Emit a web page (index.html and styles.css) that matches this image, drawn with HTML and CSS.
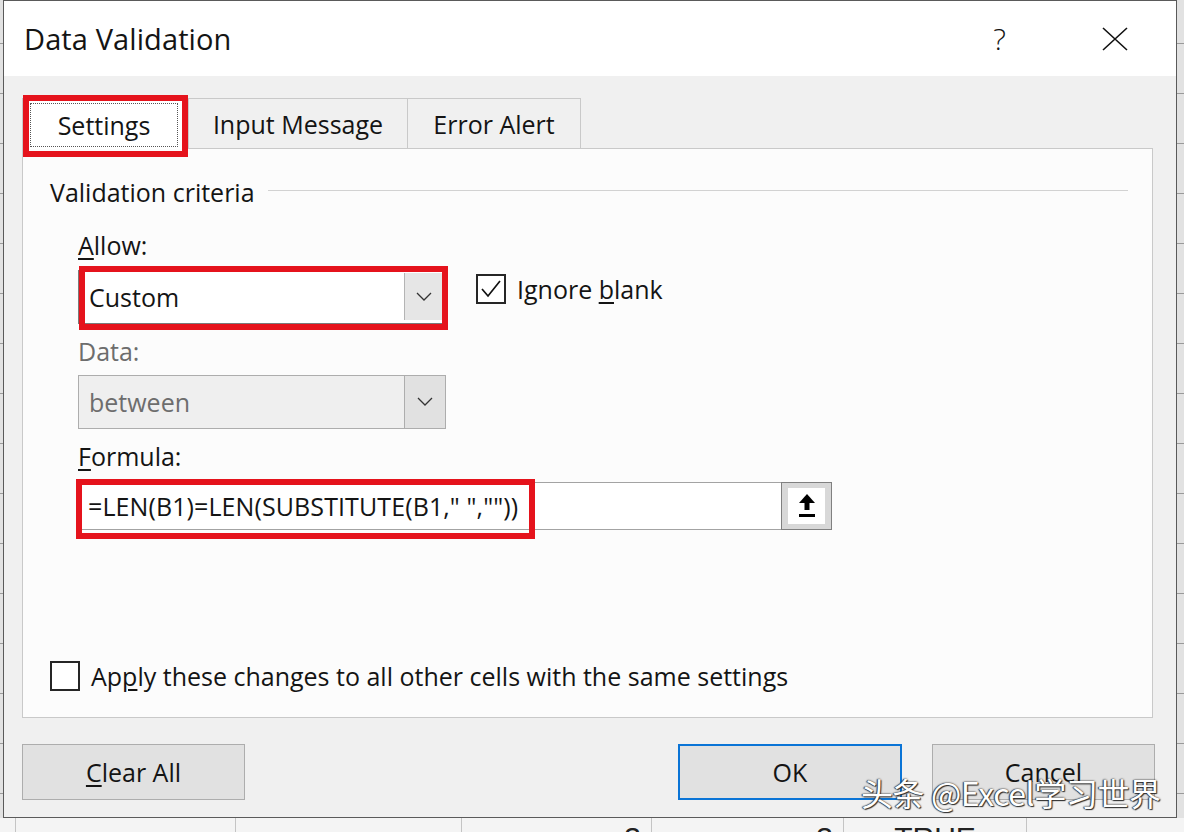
FILE: index.html
```html
<!DOCTYPE html>
<html lang="en">
<head>
	<meta charset="UTF-8">
	<title>Data Validation</title>
	<link rel="stylesheet" href="styles.css">
</head>
<body>

<div class="desk">
	<div class="dialog">
		<div class="titlebar">
			<span class="title">Data Validation</span>
			<span class="help">?</span>
			<svg class="close" width="26" height="24" viewBox="0 0 26 24"><path d="M1 1L25 23M25 1L1 23" stroke="#111" stroke-width="1.6" fill="none"/></svg>
		</div>

		<div class="body">
			<div class="tabs">
				<div class="tab t1 active mark"><span class="focus">Settings</span></div>
				<div class="tab t2">Input Message</div>
				<div class="tab t3">Error Alert</div>
			</div>

			<div class="panel">
				<div class="group-head"><span>Validation criteria</span><i class="rule"></i></div>

				<div class="fields">
					<div class="label"><u>A</u>llow:</div>
					<div class="allow-row">
						<div class="combo mark">
							<span class="value">Custom</span>
							<span class="drop"><svg width="16" height="10" viewBox="0 0 16 10"><polyline points="1,1 8,8 15,1" fill="none" stroke="#333" stroke-width="1.3"/></svg></span>
						</div>
						<div class="check ignore">
							<span class="box"><svg width="26" height="26" viewBox="0 0 26 26"><polyline points="4,13 10,20 22,5" fill="none" stroke="#111" stroke-width="1.7"/></svg></span>
							<span>Ignore <u>b</u>lank</span>
						</div>
					</div>

					<div class="label dim">Data:</div>
					<div class="combo off">
						<span class="value">between</span>
						<span class="drop"><svg width="16" height="10" viewBox="0 0 16 10"><polyline points="1,1 8,8 15,1" fill="none" stroke="#333" stroke-width="1.3"/></svg></span>
					</div>

					<div class="label"><u>F</u>ormula:</div>
					<div class="formula">
						<div class="textbox mark">=LEN(B1)=LEN(SUBSTITUTE(B1," ",""))</div>
						<span class="refbtn"><span class="refin"><svg width="16" height="24" viewBox="0 0 16 24"><polygon points="8,0 0,9 16,9" fill="#000"/><rect x="5.5" y="8" width="5" height="8" fill="#000"/><rect x="0" y="20" width="16" height="3" fill="#000"/></svg></span></span>
					</div>
				</div>

				<div class="check apply">
					<span class="box"></span>
					<span>Ap<u>p</u>ly these changes to all other cells with the same settings</span>
				</div>
			</div>

			<div class="buttons">
				<button class="btn"><u>C</u>lear All</button>
				<button class="btn ok">OK</button>
				<button class="btn cancel">Cancel</button>
			</div>
		</div>

		<div class="watermark">头条 @Excel学习世界</div>
	</div>

	<div class="sheet-row">
		<span class="cell c0"></span>
		<span class="cell c1"></span>
		<span class="cell c2"></span>
		<span class="cell c3 num">3</span>
		<span class="cell c4 num">3</span>
		<span class="cell c5 mid">TRUE</span>
		<span class="cell c6"></span>
	</div>
</div>

</body>
</html>
```

FILE: styles.css
```css
*,*::before,*::after{box-sizing: border-box;}
body{margin: 0;font-family: "Open Sans","Noto Sans",sans-serif;color: #141414;}
u{text-decoration-thickness: 2px;text-underline-offset: 3px;}

.desk{width: 1184px;height: 832px;overflow: hidden;background: #e2e2e2 repeating-linear-gradient(to bottom, transparent 0, transparent 49px, #9a9a9a 49px, #9a9a9a 50px);background-position: 0 -6px;}

.dialog{position: relative;margin-left: 3px;width: 1174px;height: 818px;border: 1px solid #5a5a5a;background: #f0f0f0;display: flex;flex-direction: column;}

.titlebar{height: 75px;flex: none;background: #fff;display: flex;align-items: center;padding: 0 48px 0 20px;}
.title{font-size: 29px;letter-spacing: 0.1px;}
.help{margin-left: auto;margin-right: 96px;font-size: 30px;font-weight: 300;}
.close{display: block;}

.body{flex: 1;padding: 22px 21px 0 18px;}

.tabs{display: flex;align-items: flex-end;height: 50px;}
.tab{height: 50px;border: 1px solid #c9c9c9;border-bottom: none;background: #f0f0f0;display: flex;align-items: center;justify-content: center;font-size: 25px;margin-left: -1px;}
.tab.t1{width: 167px;margin-left: 0;}
.tab.t2{width: 220px;}
.tab.t3{width: 174px;}
.tab.active{height: 51px;margin-bottom: -1px;background: #fff;position: relative;z-index: 1;align-items: stretch;padding: 4px 10px 2px 7px;}
.focus{flex: 1;display: flex;align-items: center;justify-content: center;border: 1px dotted #555;}

/* red annotation boxes */
.mark{position: relative;}
.mark::after{content: "";position: absolute;border: 6px solid #e5131c;pointer-events: none;}
.tab.mark::after{left: 0;right: 0;top: -4px;bottom: -8px;}
.combo.mark::after{left: 0;right: -3px;top: -5px;bottom: -7px;}
.textbox.mark::after{left: -3px;top: -4px;width: 459px;bottom: -10px;}

.panel{width: 1131px;height: 570px;border: 1px solid #c9c9c9;background: #fcfcfc;display: flex;flex-direction: column;padding: 0 24px 25px 27px;}

.group-head{display: flex;align-items: center;margin-top: 27px;height: 32px;font-size: 25px;}
.rule{flex: 1;height: 1px;background: #d2d2d2;margin-left: 13px;margin-top: -4px;}

.fields{margin-left: 28px;}
.label{font-size: 25px;line-height: 32px;margin-top: 11px;}
.fields .label:first-child{margin-top: 21px;}
.label.dim{color: #6d6d6d;}

.allow-row{display: flex;align-items: flex-start;margin-top: 9px;}

.combo{width: 368px;height: 54px;border: 1px solid #7a7a7a;background: #fff;display: flex;align-items: stretch;font-size: 25px;}
.combo .value{flex: 1;display: flex;align-items: center;padding-left: 10px;}
.drop{width: 38px;display: flex;align-items: center;justify-content: center;border-left: 1px solid #b4b4b4;background: #e6e6e6;margin: 2px 3px 3px 0;}
.combo.off{margin-top: 8px;border-color: #adadad;background: #efefef;color: #6d6d6d;}
.combo.off .drop{width: 41px;margin: 0;background: #e1e1e1;border-left-color: #adadad;}

.check{display: flex;align-items: center;gap: 11px;height: 32px;font-size: 25px;}
.box{width: 30px;height: 30px;border: 2px solid #262626;background: #fff;display: flex;align-items: center;justify-content: center;}
.ignore{margin-left: 30px;margin-top: 3px;}
.apply{margin-top: auto;}

.formula{display: flex;margin-top: 10px;width: 754px;}
.textbox{flex: 1;height: 48px;border: 1px solid #a3a3a3;border-right: none;background: #fff;display: flex;align-items: center;padding-left: 9px;font-size: 25px;letter-spacing: 0.1px;}
.refbtn{width: 51px;height: 48px;border: 1px solid #808080;background: #d8d8d8;padding: 5px 6px;display: flex;}
.refin{flex: 1;background: #fff;display: flex;align-items: center;justify-content: center;}

.buttons{display: flex;margin-top: 26px;}
.btn{width: 223px;height: 56px;border: 1px solid #adadad;background: #e1e1e1;font-family: inherit;font-size: 25px;color: #141414;padding: 0;}
.btn.ok{margin-left: auto;width: 224px;border: 2px solid #0a74d6;}
.btn.cancel{margin-left: 30px;}

.watermark{position: absolute;left: 857px;top: 772px;font-family: "Noto Sans CJK SC",sans-serif;font-size: 32px;line-height: 38px;color: #fff;letter-spacing: -0.4px;text-shadow: 0 0 2px #222, 1px 1px 1px #333, -1px 0 1px #444;}

.sheet-row{display: flex;height: 14px;overflow: hidden;background: #f4f4f4;font-family: "Liberation Sans",sans-serif;font-size: 30px;line-height: 36px;color: #222;}
.cell{border-right: 1px solid #c4c4c4;padding-top: 2px;}
.cell.num{text-align: right;padding-right: 10px;}
.cell.mid{text-align: center;}
.c0{width: 16px;}
.c1{width: 220px;}
.c2{width: 226px;}
.c3{width: 190px;}
.c4{width: 192px;}
.c5{width: 183px;}
.c6{flex: 1;border-right: none;}
```
